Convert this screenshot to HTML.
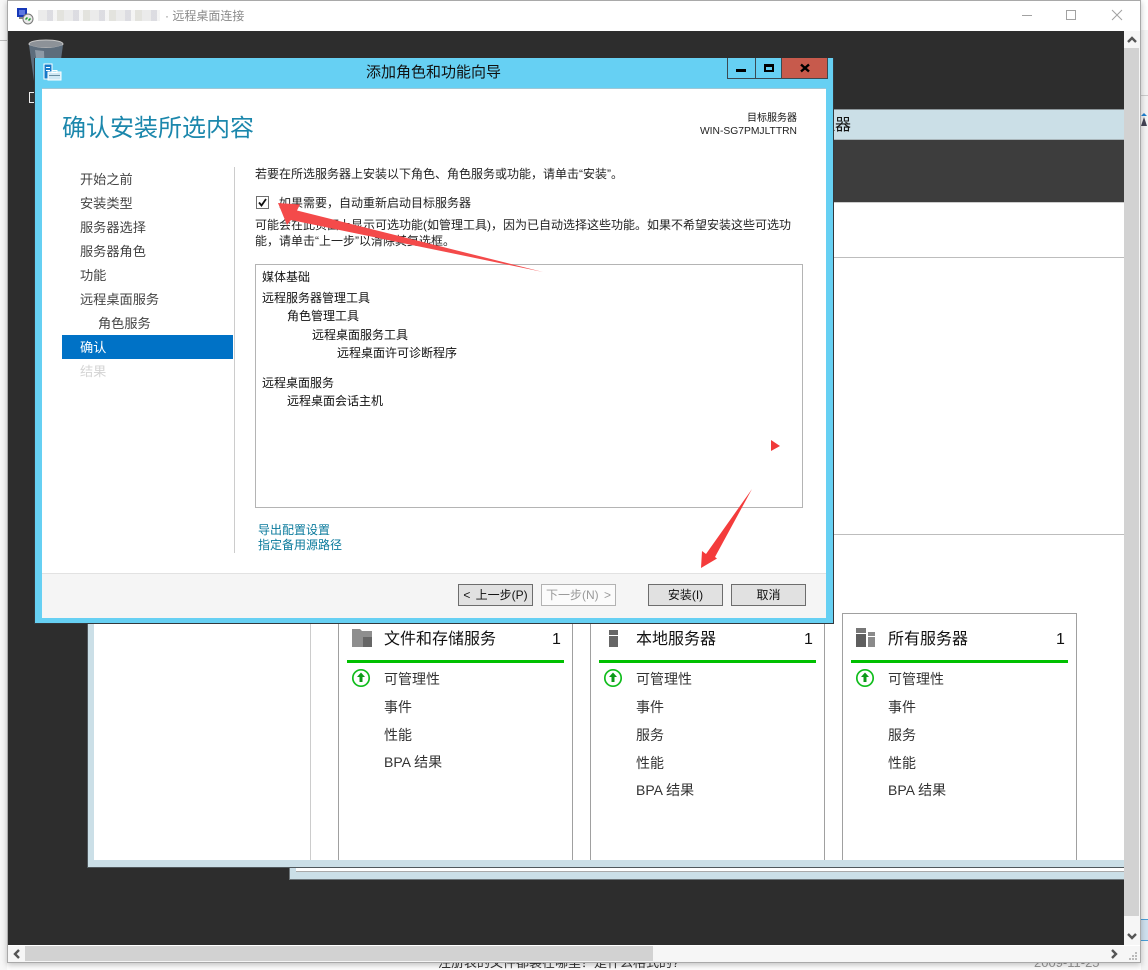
<!DOCTYPE html>
<html lang="zh">
<head>
<meta charset="utf-8">
<title>远程桌面连接</title>
<style>
html,body{margin:0;padding:0;background:#fff}
#p{position:relative;width:1148px;height:970px;overflow:hidden;background:#fff;font-family:"Liberation Sans","Noto Sans CJK SC",sans-serif;font-size:12px;color:#222}
#p div{position:absolute;box-sizing:border-box}
.t{position:absolute;white-space:nowrap;line-height:16px;height:16px}
.n{font-size:13.2px;color:#444}
.h{font-size:16px;color:#111;line-height:20px;height:20px}
.i{font-size:14px;color:#333;line-height:18px;height:18px}
.b{border:1px solid #6d6d6d;background:#e1e1e1;text-align:center;line-height:21px;color:#111;font-size:12px}
</style>
</head>
<body>
<div id="p">
<!-- page behind -->
<div style="left:0;top:0;width:7px;height:970px;background:#f7f7f7"></div>
<div style="left:0;top:40px;width:7px;height:1px;background:#bbb"></div>
<div class="t" style="left:438px;top:955px;font-size:13px;color:#333">注册表的文件都装在哪里？是什么格式的?</div>
<div class="t" style="left:1034px;top:955px;font-size:13px;color:#999">2009-11-25</div>
<div style="left:1141px;top:30px;width:7px;height:940px;background:#f4f4f4"></div>
<div style="left:1141px;top:95px;width:7px;height:1px;background:#ccc"></div>
<svg style="position:absolute;left:1141px;top:113px" width="7" height="14" viewBox="0 0 7 14"><path d="M3 0l3 3H0z" fill="#1f7fd0"/><path d="M3 4l3 9H0z" fill="#445"/></svg>
<div style="left:1141px;top:919px;width:7px;height:22px;background:#cfe0ee;border-top:1px solid #4a9fd8;border-bottom:1px solid #4a9fd8"></div>

<!-- remote window -->
<div style="left:7px;top:0;width:1134px;height:963px;background:#f6f6f6;border:1px solid #a9a9a9;box-shadow:0 2px 6px rgba(0,0,0,.25)"></div>
<div style="left:8px;top:1px;width:1132px;height:30px;background:#fff"></div>
<svg style="position:absolute;left:16px;top:7px" width="18" height="18" viewBox="0 0 18 18">
<rect x="1" y="1" width="10" height="9" fill="#1638b8"/><rect x="3" y="3" width="6" height="5" fill="#5c78e0"/><rect x="3" y="10" width="9" height="2" fill="#888"/>
<circle cx="12" cy="12" r="5" fill="#e9e9e9" stroke="#777"/><path d="M9.500 12.500l2-2M12.500 13.500l2-2" stroke="#1a9a2a" stroke-width="1.500"/>
</svg>
<div style="left:38px;top:10px;width:122px;height:11px;background:repeating-linear-gradient(90deg,#e6e6e6 0 9px,#d4d4da 9px 15px,#f2f2f2 15px 19px,#dcdcd6 19px 26px);opacity:.8"></div>
<div class="t" style="left:165px;top:8px;color:#8a8a8a;font-size:12px">· 远程桌面连接</div>
<svg style="position:absolute;left:1010px;top:3px" width="125" height="24" viewBox="0 0 125 24" fill="none" stroke="#a2a2a2" stroke-width="1">
<path d="M12 12.500h10"/><rect x="56.500" y="7.500" width="9" height="9"/><path d="M102 7l10 10M112 7l-10 10"/>
</svg>

<!-- remote desktop -->
<div style="left:8px;top:31px;width:1116px;height:914px;background:#2d2d2d"></div>
<!-- recycle bin -->
<svg style="position:absolute;left:26px;top:38px" width="40" height="50" viewBox="0 0 40 50">
<ellipse cx="20" cy="6" rx="17" ry="4" fill="#8d9298" stroke="#c8c8c8"/>
<path d="M3 7l5 36q12 5 24 0l5-36q-17 6-34 0z" fill="#5d6d7c"/>
<path d="M9 12l4 30h6l-1-29z" fill="#8d9aa6"/>
</svg>
<div style="left:29px;top:92px;width:7px;height:11px;border:1px solid #eee;background:#333"></div>

<!-- back server manager windows -->
<div style="left:289px;top:700px;width:835px;height:180px;background:#cbdfe7;border-left:1px solid #6c7478;border-bottom:1px solid #6c7478"></div>
<div style="left:296px;top:700px;width:828px;height:172px;background:#fff;border-bottom:1px solid #aaa"></div>
<div style="left:87px;top:600px;width:1037px;height:268px;background:#cbdfe7;border-left:1px solid #50585c;border-bottom:1px solid #50585c"></div>
<div style="left:94px;top:600px;width:1030px;height:260px;background:#fff"></div>
<div style="left:310px;top:600px;width:1px;height:260px;background:#ccc"></div>

<div style="left:800px;top:109px;width:324px;height:31px;background:#cbdfe7;border-top:1px solid #8b9498;border-bottom:1px solid #aab6bb"></div>
<div class="t" style="left:819px;top:118px;font-size:16px;color:#111">理器</div>
<div style="left:800px;top:140px;width:324px;height:62px;background:#3d3d3d"></div>
<div style="left:800px;top:202px;width:324px;height:420px;background:#fff;border-top:1px solid #ccc"></div>
<div style="left:800px;top:257px;width:324px;height:1px;background:#bdbdbd"></div>
<div style="left:800px;top:534px;width:324px;height:1px;background:#bdbdbd"></div>

<!-- tiles -->
<div style="left:338px;top:600px;width:235px;height:260px;border:1px solid #a0a0a0;border-bottom:0"></div>
<div style="left:590px;top:600px;width:235px;height:260px;border:1px solid #a0a0a0;border-bottom:0"></div>
<div style="left:842px;top:613px;width:235px;height:247px;border:1px solid #a0a0a0;border-bottom:0"></div>

<svg style="position:absolute;left:351px;top:627px" width="28" height="22" viewBox="0 0 28 22">
<path d="M1 2h8l2 2h10v7h-7v9H1z" fill="#8e8e8e"/><rect x="12" y="10" width="9" height="10" fill="#666"/>
</svg>
<svg style="position:absolute;left:603px;top:627px" width="22" height="22" viewBox="0 0 22 22">
<rect x="6" y="3" width="9" height="5" fill="#666"/><rect x="6" y="9" width="9" height="11" fill="#666"/>
</svg>
<svg style="position:absolute;left:855px;top:627px" width="22" height="22" viewBox="0 0 22 22">
<rect x="1" y="1" width="10" height="5" fill="#777"/><rect x="1" y="7" width="10" height="13" fill="#5e5e5e"/><rect x="13" y="5" width="7" height="4" fill="#8a8a8a"/><rect x="13" y="10" width="7" height="10" fill="#8a8a8a"/>
</svg>

<div class="t h" style="left:384px;top:630px">文件和存储服务</div>
<div class="t h" style="left:552px;top:630px">1</div>
<div class="t h" style="left:636px;top:630px">本地服务器</div>
<div class="t h" style="left:804px;top:630px">1</div>
<div class="t h" style="left:888px;top:630px">所有服务器</div>
<div class="t h" style="left:1056px;top:630px">1</div>
<div style="left:347px;top:660px;width:217px;height:3px;background:#00c000"></div>
<div style="left:599px;top:660px;width:217px;height:3px;background:#00c000"></div>
<div style="left:851px;top:660px;width:217px;height:3px;background:#00c000"></div>

<svg style="position:absolute;left:351px;top:668px" width="20" height="20" viewBox="0 0 20 20"><circle cx="10" cy="10" r="8.200" fill="#fff" stroke="#10bd1c" stroke-width="1.700"/><path d="M10 4.500l4 4.500h-2.500v5h-3V9H6z" fill="#0c9a18"/></svg>
<svg style="position:absolute;left:603px;top:668px" width="20" height="20" viewBox="0 0 20 20"><circle cx="10" cy="10" r="8.200" fill="#fff" stroke="#10bd1c" stroke-width="1.700"/><path d="M10 4.500l4 4.500h-2.500v5h-3V9H6z" fill="#0c9a18"/></svg>
<svg style="position:absolute;left:855px;top:668px" width="20" height="20" viewBox="0 0 20 20"><circle cx="10" cy="10" r="8.200" fill="#fff" stroke="#10bd1c" stroke-width="1.700"/><path d="M10 4.500l4 4.500h-2.500v5h-3V9H6z" fill="#0c9a18"/></svg>

<div class="t i" style="left:384px;top:670px">可管理性</div>
<div class="t i" style="left:384px;top:698px">事件</div>
<div class="t i" style="left:384px;top:726px">性能</div>
<div class="t i" style="left:384px;top:753px">BPA 结果</div>
<div class="t i" style="left:636px;top:670px">可管理性</div>
<div class="t i" style="left:636px;top:698px">事件</div>
<div class="t i" style="left:636px;top:726px">服务</div>
<div class="t i" style="left:636px;top:754px">性能</div>
<div class="t i" style="left:636px;top:781px">BPA 结果</div>
<div class="t i" style="left:888px;top:670px">可管理性</div>
<div class="t i" style="left:888px;top:698px">事件</div>
<div class="t i" style="left:888px;top:726px">服务</div>
<div class="t i" style="left:888px;top:754px">性能</div>
<div class="t i" style="left:888px;top:781px">BPA 结果</div>

<div style="left:8px;top:880px;width:1116px;height:65px;background:#2d2d2d"></div>

<!-- scrollbars -->
<div style="left:1124px;top:31px;width:16px;height:914px;background:#f6f6f6"></div>
<div style="left:1124px;top:48px;width:15px;height:868px;background:#d2d2d2"></div>
<svg style="position:absolute;left:1125px;top:35px" width="14" height="10" viewBox="0 0 14 10"><path d="M3 7l4-4 4 4" fill="none" stroke="#555" stroke-width="2.400"/></svg>
<svg style="position:absolute;left:1125px;top:931px" width="14" height="10" viewBox="0 0 14 10"><path d="M3 3l4 4 4-4" fill="none" stroke="#555" stroke-width="2.400"/></svg>
<div style="left:8px;top:945px;width:1132px;height:17px;background:#f6f6f6;border-top:1px solid #fff"></div>
<div style="left:25px;top:946px;width:628px;height:15px;background:#d2d2d2"></div>
<svg style="position:absolute;left:11px;top:948px" width="12" height="12" viewBox="0 0 12 12"><path d="M8 2L4 6l4 4" fill="none" stroke="#555" stroke-width="2.400"/></svg>
<svg style="position:absolute;left:1108px;top:948px" width="12" height="12" viewBox="0 0 12 12"><path d="M4 2l4 4-4 4" fill="none" stroke="#555" stroke-width="2.400"/></svg>
<svg style="position:absolute;left:1128px;top:951px" width="10" height="10" viewBox="0 0 10 10" fill="#bbb"><rect x="7" y="1" width="2" height="2"/><rect x="4" y="4" width="2" height="2"/><rect x="7" y="4" width="2" height="2"/><rect x="1" y="7" width="2" height="2"/><rect x="4" y="7" width="2" height="2"/><rect x="7" y="7" width="2" height="2"/></svg>

<!-- dialog -->
<div style="left:34px;top:58px;width:800px;height:566px;background:#66d0f3;border:1px solid #33383c;border-top:0"></div>
<svg style="position:absolute;left:43px;top:63px" width="19" height="18" viewBox="0 0 19 18">
<rect x="1" y="1" width="8" height="15" fill="#1478c8" stroke="#fff"/><rect x="3" y="4" width="4" height="1" fill="#fff"/><rect x="3" y="7" width="4" height="1" fill="#fff"/>
<rect x="5" y="9" width="13" height="8" fill="#cfe8f4" stroke="#fff"/><rect x="9" y="7.500" width="5" height="2" fill="none" stroke="#fff"/><rect x="6" y="12" width="11" height="1" fill="#6a8fa3"/>
</svg>
<div class="t" style="left:34px;top:65px;width:799px;text-align:center;font-size:15px;line-height:16px;color:#111">添加角色和功能向导</div>
<!-- caption buttons -->
<div style="left:727px;top:58px;width:29px;height:21px;background:#66d0f3;border:1px solid #3b4a52;border-top:0"></div>
<div style="left:755px;top:58px;width:27px;height:21px;background:#66d0f3;border:1px solid #3b4a52;border-top:0"></div>
<div style="left:781px;top:58px;width:47px;height:21px;background:#c75a4c;border:1px solid #3b4a52;border-top:0"></div>
<div style="left:736px;top:69px;width:10px;height:3px;background:#000"></div>
<div style="left:764px;top:64px;width:10px;height:8px;border:2px solid #000;border-top-width:3px"></div>
<svg style="position:absolute;left:799px;top:62px" width="12" height="12" viewBox="0 0 12 12"><path d="M2 2.500l8 7M10 2.500l-8 7" stroke="#000" stroke-width="2.400"/></svg>

<!-- client -->
<div style="left:42px;top:88px;width:784px;height:530px;background:#fff;border-top:1px solid #9fc7d6"></div>
<div style="left:42px;top:573px;width:784px;height:45px;background:#f5f5f5;border-top:1px solid #e2e2e2"></div>
<div class="t" style="left:62px;top:113px;font-size:24px;line-height:32px;height:32px;color:#1b87ac">确认安装所选内容</div>
<div class="t" style="right:351px;top:112px;font-size:10px;color:#111;line-height:14px;height:14px">目标服务器</div>
<div class="t" style="right:351px;top:125px;font-size:10.300px;color:#222;line-height:14px;height:14px">WIN-SG7PMJLTTRN</div>

<!-- nav -->
<div style="left:234px;top:167px;width:1px;height:386px;background:#ccc"></div>
<div style="left:62px;top:335px;width:171px;height:24px;background:#0072c6"></div>
<div class="t n" style="left:80px;top:172px">开始之前</div>
<div class="t n" style="left:80px;top:196px">安装类型</div>
<div class="t n" style="left:80px;top:220px">服务器选择</div>
<div class="t n" style="left:80px;top:244px">服务器角色</div>
<div class="t n" style="left:80px;top:268px">功能</div>
<div class="t n" style="left:80px;top:292px">远程桌面服务</div>
<div class="t n" style="left:98px;top:316px">角色服务</div>
<div class="t n" style="left:80px;top:340px;color:#fff">确认</div>
<div class="t n" style="left:80px;top:364px;color:#d4d4d4">结果</div>

<!-- body -->
<div class="t" style="left:255px;top:166px;color:#222">若要在所选服务器上安装以下角色、角色服务或功能，请单击“安装”。</div>
<div style="left:256px;top:196px;width:13px;height:13px;border:1px solid #6f6f6f;background:#fff"></div>
<svg style="position:absolute;left:256px;top:196px" width="13" height="13" viewBox="0 0 13 13"><path d="M3 6.500l2.500 3L10 3" fill="none" stroke="#111" stroke-width="1.800"/></svg>
<div class="t" style="left:279px;top:195px;color:#222">如果需要，自动重新启动目标服务器</div>
<div class="t" style="left:255px;top:217px;color:#222">可能会在此页面上显示可选功能(如管理工具)，因为已自动选择这些功能。如果不希望安装这些可选功</div>
<div class="t" style="left:255px;top:233px;color:#222">能，请单击“上一步”以清除其复选框。</div>

<div style="left:255px;top:264px;width:548px;height:244px;background:#fff;border:1px solid #b4b4b4"></div>
<div class="t" style="left:262px;top:269px;color:#111">媒体基础</div>
<div class="t" style="left:262px;top:290px;color:#111">远程服务器管理工具</div>
<div class="t" style="left:287px;top:308px;color:#111">角色管理工具</div>
<div class="t" style="left:312px;top:327px;color:#111">远程桌面服务工具</div>
<div class="t" style="left:337px;top:345px;color:#111">远程桌面许可诊断程序</div>
<div class="t" style="left:262px;top:375px;color:#111">远程桌面服务</div>
<div class="t" style="left:287px;top:393px;color:#111">远程桌面会话主机</div>

<div class="t" style="left:258px;top:522px;color:#0a7a9c">导出配置设置</div>
<div class="t" style="left:258px;top:537px;color:#0a7a9c">指定备用源路径</div>

<!-- buttons -->
<div class="b" style="left:458px;top:584px;width:75px;height:22px;word-spacing:2px">&lt; 上一步(P)</div>
<div class="b" style="left:541px;top:584px;width:75px;height:22px;background:#fbfbfb;border-color:#b2b2b2;color:#9a9a9a;word-spacing:2px">下一步(N) &gt;</div>
<div class="b" style="left:648px;top:584px;width:75px;height:22px">安装(I)</div>
<div class="b" style="left:731px;top:584px;width:75px;height:22px">取消</div>

<!-- annotations -->
<svg style="position:absolute;left:0;top:0" width="1148" height="970" viewBox="0 0 1148 970">
<path d="M278 203L300 204.500L297 210.500L543 272L291 220L287 225z" fill="#f44a4a"/>
<path d="M771 440L780 446L771 451z" fill="#f03a3a"/>
<path d="M701 568L702 551L706 554L752 489L715 557L717 558.500z" fill="#f43c3c"/>
</svg>
</div>
</body>
</html>
